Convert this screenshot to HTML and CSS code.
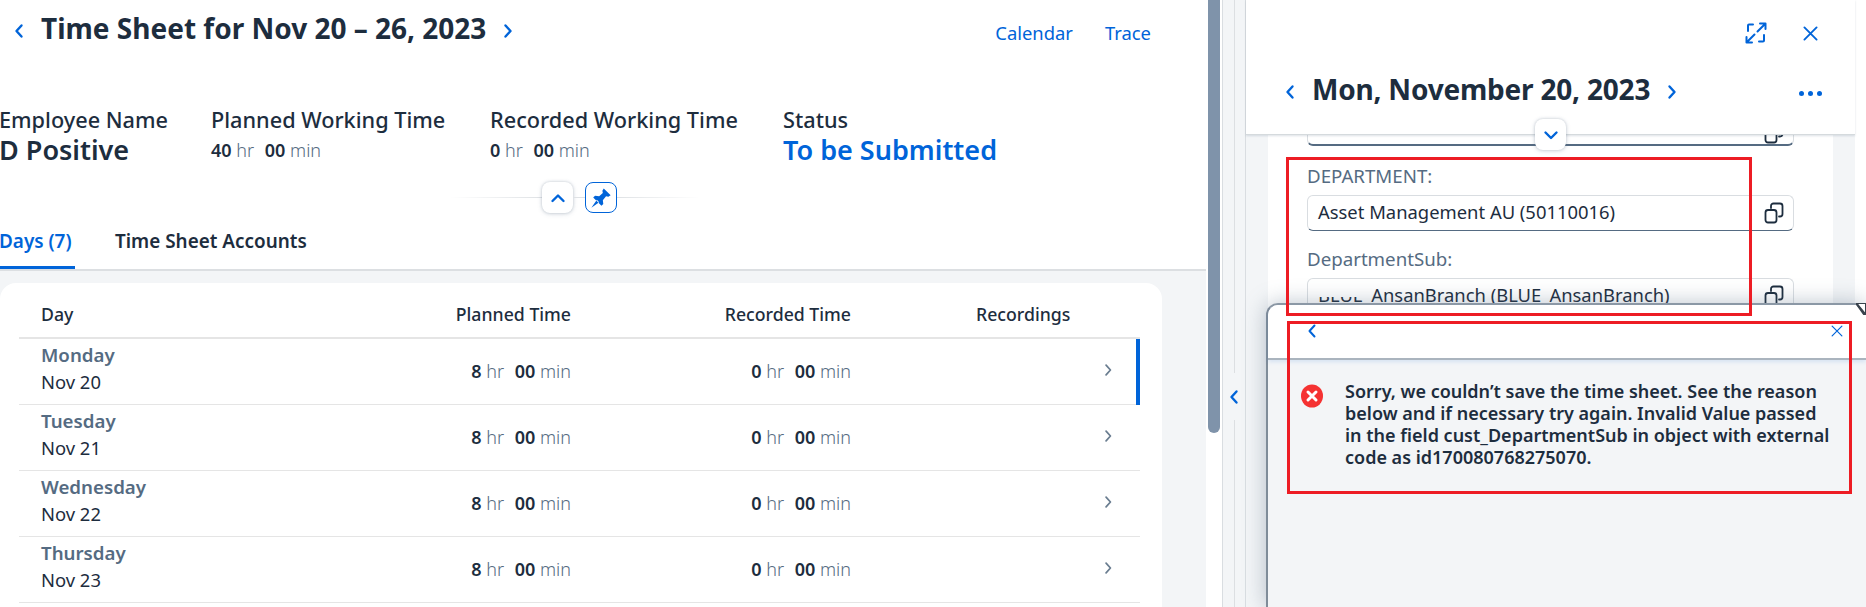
FILE: index.html
```html
<!DOCTYPE html>
<html>
<head>
    <title>Time Sheet</title>
    <link rel="stylesheet" href="styles.css">
</head>
<body>
    <svg class="defs" width="0" height="0">
        <symbol id="chev-left" viewBox="0 0 12 16"><path d="M8.5 2.5 3.5 8l5 5.5"/></symbol>
        <symbol id="chev-right" viewBox="0 0 12 16"><path d="M3.5 2.5 8.5 8l-5 5.5"/></symbol>
        <symbol id="cross" viewBox="0 0 16 16"><path d="M1.5 1.5l13 13M14.5 1.5l-13 13"/></symbol>
        <symbol id="copy" viewBox="0 0 20 22"><path d="M7 6V4a2.5 2.5 0 0 1 2.5-2.5h6.500A2.500 2.500 0 0 1 18.500 4v8a2.500 2.500 0 0 1-2.500 2.500h-1"/><rect x="1.500" y="8" width="11" height="12.500" rx="2.500"/></symbol>
    </svg>

    <div class="main">
        <div class="sheet-head">
            <div class="title-row">
                <svg class="chev"><use href="#chev-left"/></svg>
                <h1 class="title">Time Sheet for Nov 20 – 26, 2023</h1>
                <svg class="chev chev-next"><use href="#chev-right"/></svg>
                <div class="links">
                    <a>Calendar</a>
                    <a>Trace</a>
                </div>
            </div>
            <div class="stats">
                <div class="stat stat-name">
                    <div class="stat-label">Employee Name</div>
                    <div class="stat-big">D Positive</div>
                </div>
                <div class="stat stat-planned">
                    <div class="stat-label">Planned Working Time</div>
                    <div class="stat-time"><b>40</b> hr <b>00</b> min</div>
                </div>
                <div class="stat stat-recorded">
                    <div class="stat-label">Recorded Working Time</div>
                    <div class="stat-time"><b>0</b> hr <b>00</b> min</div>
                </div>
                <div class="stat">
                    <div class="stat-label">Status</div>
                    <div class="stat-big stat-status">To be Submitted</div>
                </div>
            </div>
            <div class="collapse-row">
                <span class="rule rule-left"></span>
                <span class="round-btn">
                    <svg class="mini" viewBox="0 0 16 16"><path d="M2.500 11 8 5.500l5.500 5.500"/></svg>
                </span>
                <span class="rule rule-mid"></span>
                <span class="round-btn pin-btn">
                    <svg class="pin" viewBox="0 0 24 24"><path d="M15 1.500 22.500 9 20 10.500 17.500 10 14 14.500 14.500 18.500 12.500 20.500 3.500 11.500 5.500 9.500 10 10 14 6.500 13.500 4ZM7.500 14 1.500 22.500 10 16.500Z"/></svg>
                </span>
                <span class="rule rule-right"></span>
            </div>
            <div class="tabs">
                <span class="tab tab-on">Days (7)</span>
                <span class="tab">Time Sheet Accounts</span>
            </div>
        </div>

        <div class="sheet-body">
            <div class="card">
                <div class="row row-head">
                    <div class="col-day">Day</div>
                    <div class="col-time">Planned Time</div>
                    <div class="col-time">Recorded Time</div>
                    <div class="col-rec">Recordings</div>
                </div>
                <div class="row row-day row-on">
                    <div class="col-day"><div class="day-name">Monday</div><div>Nov 20</div></div>
                    <div class="col-time"><b>8</b> hr <b>00</b> min</div>
                    <div class="col-time"><b>0</b> hr <b>00</b> min</div>
                    <div class="col-go"><svg class="go" viewBox="0 0 12 16"><use href="#chev-right"/></svg></div>
                </div>
                <div class="row row-day">
                    <div class="col-day"><div class="day-name">Tuesday</div><div>Nov 21</div></div>
                    <div class="col-time"><b>8</b> hr <b>00</b> min</div>
                    <div class="col-time"><b>0</b> hr <b>00</b> min</div>
                    <div class="col-go"><svg class="go" viewBox="0 0 12 16"><use href="#chev-right"/></svg></div>
                </div>
                <div class="row row-day">
                    <div class="col-day"><div class="day-name">Wednesday</div><div>Nov 22</div></div>
                    <div class="col-time"><b>8</b> hr <b>00</b> min</div>
                    <div class="col-time"><b>0</b> hr <b>00</b> min</div>
                    <div class="col-go"><svg class="go" viewBox="0 0 12 16"><use href="#chev-right"/></svg></div>
                </div>
                <div class="row row-day">
                    <div class="col-day"><div class="day-name">Thursday</div><div>Nov 23</div></div>
                    <div class="col-time"><b>8</b> hr <b>00</b> min</div>
                    <div class="col-time"><b>0</b> hr <b>00</b> min</div>
                    <div class="col-go"><svg class="go" viewBox="0 0 12 16"><use href="#chev-right"/></svg></div>
                </div>
            </div>
        </div>
    </div>

    <div class="scrollbar"><div class="thumb"></div></div>

    <div class="splitter">
        <span class="split-line split-top"></span>
        <svg class="split-chev"><use href="#chev-left"/></svg>
        <span class="split-line"></span>
    </div>

    <div class="detail">
        <div class="detail-head">
            <div class="detail-tools">
                <svg class="expand" viewBox="0 0 22 22">
                    <path d="M3 9V3.500a1 1 0 0 1 1-1h4M19 13v5.500a1 1 0 0 1-1 1h-4"/>
                    <path d="M12.500 9.500 20.500 1.500M15 1.500h5.500V7M9.500 12.500l-8 8M7 20.500H1.500V15"/>
                </svg>
                <svg class="tool-x"><use href="#cross"/></svg>
            </div>
            <div class="detail-title-row">
                <svg class="chev"><use href="#chev-left"/></svg>
                <h2 class="detail-title">Mon, November 20, 2023</h2>
                <svg class="chev chev-next"><use href="#chev-right"/></svg>
                <div class="dots"><i></i><i></i><i></i></div>
            </div>
            <span class="round-btn head-toggle">
                <svg class="mini" viewBox="0 0 16 16"><path d="M2.500 5.500 8 11l5.500-5.500"/></svg>
            </span>
        </div>
        <div class="detail-body">
            <div class="form-card">
                <div class="field field-cut">
                    <svg class="copy copy-cut"><use href="#copy"/></svg>
                </div>
                <label class="form-label">DEPARTMENT:</label>
                <div class="field">
                    <span class="field-text">Asset Management AU (50110016)</span>
                    <svg class="copy"><use href="#copy"/></svg>
                </div>
                <label class="form-label">DepartmentSub:</label>
                <div class="field">
                    <span class="field-text masked">BLUE<i class="mask"></i>_AnsanBranch (BLUE_AnsanBranch)</span>
                    <svg class="copy"><use href="#copy"/></svg>
                </div>
            </div>
        </div>
    </div>

    <div class="dialog">
        <div class="dialog-head">
            <svg class="dlg-back"><use href="#chev-left"/></svg>
            <svg class="dlg-x"><use href="#cross"/></svg>
        </div>
        <div class="dialog-body">
            <svg class="err" viewBox="0 0 22 24">
                <ellipse cx="11" cy="12" rx="11" ry="11.500"/>
                <path d="M7 8l8 8M15 8l-8 8"/>
            </svg>
            <p class="err-text">Sorry, we couldn’t save the time sheet. See the reason below and if necessary try again. Invalid Value passed in the field cust_DepartmentSub in object with external code as id170080768275070.</p>
        </div>
        <svg class="corner" viewBox="0 0 10 12"><path d="M0 0h10v12Z" fill="#fff"/><path d="M0 0l8.500 12" /></svg>
    </div>

    <div class="mark mark-fields"></div>
    <div class="mark mark-error"></div>
</body>
</html>
```

FILE: styles.css
```css
* {
    box-sizing: border-box;
}
html, body {
    margin: 0;
    height: 607px;
    overflow: hidden;
}
body {
    display: flex;
    position: relative;
    width: 1866px;
    background: #fff;
    color: #1d2d3e;
    font-family: "Noto Sans", Arial, sans-serif;
    font-size: 17.700px;
}
.defs {
    position: absolute;
}
svg {
    display: block;
    flex: none;
    fill: none;
    stroke: #0064d9;
    stroke-width: 2;
    stroke-linecap: round;
    stroke-linejoin: round;
}
b {
    font-weight: 600;
}
b + b {
    margin-left: 6px;
}

/* left page */
.main {
    width: 1206px;
    display: flex;
    flex-direction: column;
}
.sheet-head {
    height: 271px;
    border-bottom: 2px solid #dcdfe2;
}
.title-row {
    height: 50px;
    padding: 11px 55px 0 13px;
    display: flex;
    align-items: flex-start;
}
.chev {
    width: 12px;
    height: 16px;
    margin-top: 12px;
    stroke-width: 2.400;
}
.title {
    margin: 0 0 0 16px;
    font-size: 28px;
    line-height: 34px;
    font-weight: 700;
}
.chev-next {
    margin-left: 16px;
}
.links {
    margin-left: auto;
    display: flex;
    gap: 32px;
    padding-top: 10px;
    color: #0064d9;
    font-size: 18.400px;
    line-height: 24px;
}
.stats {
    height: 115px;
    padding: 56px 0 0 0;
    margin-left: -1px;
    display: flex;
}
.stat-name {
    width: 212px;
}
.stat-planned {
    width: 279px;
}
.stat-recorded {
    width: 293px;
}
.stat-label {
    font-size: 21.700px;
    line-height: 28px;
    font-weight: 500;
}
.stat-big {
    font-size: 27px;
    line-height: 32px;
    font-weight: 600;
}
.stat-status {
    color: #0064d9;
}
.stat-time {
    font-size: 18px;
    line-height: 32px;
    font-weight: 300;
    color: #556b82;
}
.stat-time b {
    color: #1d2d3e;
}
.collapse-row {
    height: 31px;
    margin-top: 17px;
    display: flex;
    align-items: center;
}
.rule {
    height: 1px;
    background: #dfe2e5;
}
.rule-left {
    width: 92px;
    margin-left: 450px;
    background: linear-gradient(to right, #fff, #dfe2e5);
}
.rule-mid {
    width: 12px;
}
.rule-right {
    width: 83px;
    background: linear-gradient(to right, #dfe2e5, #fff);
}
.round-btn {
    width: 31px;
    height: 31px;
    display: flex;
    align-items: center;
    justify-content: center;
    flex: none;
    background: #fff;
    border-radius: 8px;
    box-shadow: 0 0 3px rgba(85, 107, 130, .3), 0 1px 5px rgba(85, 107, 130, .2);
}
.mini {
    width: 16px;
    height: 16px;
    stroke-width: 2.400;
}
.pin-btn {
    width: 32px;
    border: 1px solid #0064d9;
    box-shadow: none;
}
.pin {
    width: 22px;
    height: 22px;
    fill: #0064d9;
    stroke: none;
}
.tabs {
    height: 56px;
    margin-left: -1px;
    padding-top: 16px;
    display: flex;
    gap: 40px;
}
.tab {
    height: 40px;
    font-size: 18.900px;
    line-height: 24px;
    font-weight: 600;
}
.tab-on {
    width: 76px;
    color: #0064d9;
    border-bottom: 3px solid #0064d9;
    border-top-right-radius: 3px;
    white-space: nowrap;
}
.sheet-body {
    flex: 1;
    padding: 12px 44px 0 0;
    background: #f3f5f7;
}
.card {
    height: 100%;
    padding: 0 22px 0 19px;
    background: #fff;
    border-radius: 16px 16px 0 0;
}
.row {
    display: grid;
    grid-template-columns: 272px 280px 280px 1fr;
}
.row-head {
    height: 56px;
    padding-top: 19px;
    border-bottom: 2px solid #e5e5e5;
    line-height: 24px;
    font-weight: 500;
}
.row-day {
    position: relative;
    height: 66px;
    border-bottom: 1px solid #e5e5e5;
    font-size: 18px;
    font-weight: 300;
    color: #556b82;
}
.row-on::after {
    content: "";
    position: absolute;
    right: 0;
    top: 0;
    bottom: -1px;
    width: 4px;
    background: #0064d9;
}
.col-day {
    padding-left: 22px;
    color: #1d2d3e;
    font-weight: 400;
}
.row-head .col-day {
    font-weight: 500;
}
.row-day .col-day {
    padding-top: 2px;
    line-height: 27px;
    font-size: 18.400px;
}
.day-name {
    color: #556b82;
    font-size: 18.700px;
    font-weight: 600;
}
.col-time {
    text-align: right;
}
.row-day .col-time {
    padding-top: 20px;
    line-height: 24px;
}
.row-day b {
    color: #1d2d3e;
}
.col-rec {
    padding-left: 125px;
}
.col-go {
    display: flex;
    justify-content: flex-end;
    padding: 24px 27px 0 0;
}
.go {
    width: 10.500px;
    height: 14px;
    stroke: #6a7d90;
    stroke-width: 2;
}

/* scrollbar and the splitter */
.scrollbar {
    width: 16px;
    padding: 0 2px;
}
.thumb {
    height: 433px;
    background: #7f93aa;
    border-radius: 0 0 7px 7px;
}
.splitter {
    width: 24px;
    padding-left: 11px;
    background: #f3f5f7;
    border-left: 1px solid #d9dde1;
    border-right: 1px solid #d9dde1;
    display: flex;
    flex-direction: column;
    align-items: flex-start;
}
.split-line {
    flex: 1;
    width: 1px;
    background: #dcdfe2;
}
.split-top {
    flex: none;
    height: 373px;
}
.split-chev {
    width: 12px;
    height: 16px;
    margin: 16px 0 15px -6px;
    stroke-width: 2.400;
}

/* right page */
.detail {
    width: 609px;
    display: flex;
    flex-direction: column;
    background: #f3f5f7;
}
.detail-head {
    position: relative;
    height: 135px;
    background: #fff;
    border-bottom: 1px solid #d5dadd;
    box-shadow: 0 1px 2px rgba(85, 107, 130, .2);
    z-index: 1;
}
.detail-tools {
    height: 66px;
    padding: 22px 37px 0 0;
    display: flex;
    justify-content: flex-end;
    gap: 36px;
}
.expand {
    width: 22px;
    height: 22px;
}
.tool-x {
    width: 15px;
    height: 15px;
    margin-top: 4px;
}
.detail-title-row {
    display: flex;
    align-items: flex-start;
    padding: 6px 33px 0 38px;
}
.detail-title {
    margin: 0 0 0 16px;
    font-size: 28px;
    line-height: 34px;
    font-weight: 700;
    letter-spacing: -0.2px;
}
.dots {
    margin-left: auto;
    padding-top: 19px;
    display: flex;
    gap: 4px;
}
.dots i {
    width: 5px;
    height: 5px;
    border-radius: 50%;
    background: #0064d9;
}
.head-toggle {
    position: absolute;
    left: 289px;
    bottom: -16px;
}
.detail-body {
    flex: 1;
    padding: 0 22px;
}
.form-card {
    height: 100%;
    padding: 0 39px;
    background: #fff;
}
.form-label {
    display: block;
    height: 47px;
    padding-top: 16px;
    color: #556b82;
    font-size: 18.700px;
    line-height: 24px;
}
.field-cut + .form-label {
    height: 49px;
    padding-top: 18px;
}
.field {
    height: 36px;
    padding: 0 10px;
    display: flex;
    align-items: center;
    justify-content: space-between;
    border: 1px solid #d9dde1;
    border-bottom-color: #556b82;
    border-radius: 6px;
    background: #fff;
    font-size: 18.400px;
    font-weight: 400;
}
.field-cut {
    height: 11px;
    border-top: 0;
    border-radius: 0 0 6px 6px;
    border-bottom-width: 2px;
    overflow: hidden;
    justify-content: flex-end;
    align-items: flex-end;
}
.field-text {
    margin-top: -3px;
}
.copy {
    width: 20px;
    height: 22px;
    margin-right: -1px;
    stroke: #1d2d3e;
    stroke-width: 1.800;
}
.copy-cut {
    margin-bottom: 0;
}
.masked {
    position: relative;
}
.mask {
    position: absolute;
    left: 0;
    top: 6px;
    width: 46px;
    height: 9px;
    background: #fff;
}

/* the message that slides over the right page */
.dialog {
    position: absolute;
    left: 1266px;
    top: 303px;
    right: 0;
    bottom: 0;
    background: #f3f5f7;
    border-left: 2px solid #7f8c99;
    border-top: 2px solid #8d99a5;
    border-top-left-radius: 12px;
    box-shadow: 0 0 22px rgba(85, 107, 130, .4);
    z-index: 2;
}
.dialog-head {
    height: 55px;
    padding: 18px 23px 0 38px;
    display: flex;
    justify-content: space-between;
    align-items: flex-start;
    background: #fff;
    border-top-left-radius: 10px;
    border-bottom: 2px solid #aab4be;
    box-shadow: 0 2px 4px rgba(0, 100, 217, .12);
}
.dlg-back {
    width: 12px;
    height: 16px;
    stroke-width: 2;
}
.dlg-x {
    width: 12px;
    height: 12px;
    margin: 2px 0 0;
    stroke-width: 1.600;
}
.dialog-body {
    display: flex;
    padding: 24px 10px 0 33px;
}
.err {
    width: 22px;
    height: 24px;
    fill: #f53232;
    stroke: none;
}
.err path {
    stroke: #fff;
    stroke-width: 3;
}
.err-text {
    margin: -4px 0 0 22px;
    width: 485px;
    font-size: 18px;
    line-height: 22px;
    font-weight: 600;
}
.corner {
    position: absolute;
    right: 0;
    top: -2px;
    width: 10px;
    height: 12px;
    stroke: #39434d;
    stroke-width: 2;
}

/* red boxes drawn on the picture */
.mark {
    position: absolute;
    border: 3px solid #ed1c24;
    z-index: 3;
}
.mark-fields {
    left: 1286px;
    top: 157px;
    width: 466px;
    height: 159px;
}
.mark-error {
    left: 1287px;
    top: 321px;
    width: 565px;
    height: 173px;
}
```
